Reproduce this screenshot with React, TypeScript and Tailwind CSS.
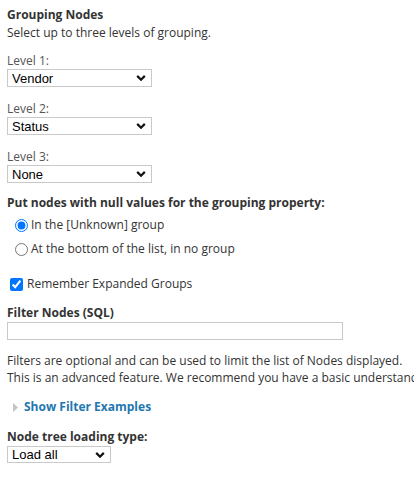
import React from 'react';

const Chevron = () => (
  <svg
    className="pointer-events-none absolute right-[6px] top-1/2 -translate-y-1/2"
    width="10"
    height="7"
    viewBox="0 0 10 7"
    fill="none">
    <path d="M1.2 1.4 5 5.2 8.8 1.4" stroke="#111" strokeWidth="2.2" />
  </svg>
);

interface SelectBoxProps {
  value: string;
  options: string[];
  width: string;
  height?: string;
}

const SelectBox = ({ value, options, width, height = 'h-[18px]' }: SelectBoxProps) => (
  <div className={`relative ${width} ${height}`}>
    <select
      defaultValue={value}
      className="h-full w-full appearance-none border border-[#c9c9c9] bg-white pl-[4px] text-[13px] leading-none text-black outline-none"
      style={{ fontFamily: '"Liberation Sans", Arial, sans-serif' }}>
      {options.map((o) => (
        <option key={o}>{o}</option>
      ))}
    </select>
    <Chevron />
  </div>
);

const groupOptions = ['None', 'Vendor', 'Status', 'Machine Type', 'Location'];

export default function App() {
  return (
    <div
      className="min-h-[482px] overflow-hidden bg-white pl-[7px] pt-[6px] text-[12px] text-[#333]"
      style={{ fontFamily: '"Open Sans", sans-serif' }}>
      {/* Grouping */}
      <h3 className="font-bold leading-[18px]">Grouping Nodes</h3>
      <p className="leading-[18px]">Select up to three levels of grouping.</p>

      <div className="mt-[10px] flex flex-col gap-[13px]">
        {[
          ['Level 1:', 'Vendor'],
          ['Level 2:', 'Status'],
          ['Level 3:', 'None']
        ].map(([label, value]) => (
          <div key={label}>
            <label className="block leading-[17px] text-[#555]">{label}</label>
            <SelectBox value={value} options={groupOptions} width="w-[145px]" />
          </div>
        ))}
      </div>

      {/* Null values */}
      <h4 className="mt-[11px] font-bold leading-[18px]">
        Put nodes with null values for the grouping property:
      </h4>
      <div className="mt-[1px] pl-[8px]">
        <label className="flex h-[24px] items-center gap-[3px]">
          <input type="radio" name="nullGroup" defaultChecked className="m-0 h-[13px] w-[13px]" />
          <span>In the [Unknown] group</span>
        </label>
        <label className="flex h-[24px] items-center gap-[3px]">
          <input type="radio" name="nullGroup" className="m-0 h-[13px] w-[13px]" />
          <span>At the bottom of the list, in no group</span>
        </label>
      </div>

      <label className="mt-[14px] flex h-[18px] items-center gap-[4px] pl-[3px]">
        <input type="checkbox" defaultChecked className="m-0 h-[13px] w-[13px]" />
        <span>Remember Expanded Groups</span>
      </label>

      {/* Filter */}
      <h4 className="mt-[11px] font-bold leading-[18px]">Filter Nodes (SQL)</h4>
      <input
        type="text"
        className="block h-[18px] w-[336px] border border-[#c9c9c9] bg-white outline-none"
      />

      <p className="mt-[12px] whitespace-nowrap leading-[17px]">
        Filters are optional and can be used to limit the list of Nodes displayed.
        <br />
        This is an advanced feature. We recommend you have a basic understanding of SQL.
      </p>

      <div className="mt-[12px] flex h-[18px] items-center gap-[6px] pl-[6px]">
        <svg width="5" height="9" viewBox="0 0 5 9">
          <path d="M0 0 5 4.5 0 9Z" fill="#c4c4c4" />
        </svg>
        <a href="#" className="font-bold text-[#2377b0]">
          Show Filter Examples
        </a>
      </div>

      <h4 className="mt-[12px] font-bold leading-[18px]">Node tree loading type:</h4>
      <SelectBox value="Load all" options={['Load all', 'Load on demand']} width="w-[104px]" height="h-[17px]" />
    </div>
  );
}
